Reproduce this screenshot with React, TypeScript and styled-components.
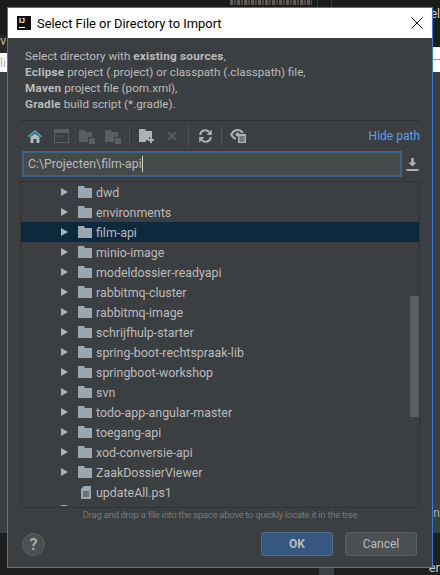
import styled, {createGlobalStyle} from "styled-components"

const folders = [
    "dwd",
    "environments",
    "film-api",
    "minio-image",
    "modeldossier-readyapi",
    "rabbitmq-cluster",
    "rabbitmq-image",
    "schrijfhulp-starter",
    "spring-boot-rechtspraak-lib",
    "springboot-workshop",
    "svn",
    "todo-app-angular-master",
    "toegang-api",
    "xod-conversie-api",
    "ZaakDossierViewer",
]

function FolderIcon(props: { color?: string }) {
    return (
        <svg width="14" height="12" viewBox="0 0 14 12">
            <path d="M0 0H6L7 2H14V12H0Z" fill={props.color ?? "#9aa7b0"}/>
        </svg>
    )
}

function GhostFolder(props: { color: string }) {
    return (
        <svg width="16" height="15" viewBox="0 0 16 15">
            <path d="M0 1H6L7 3H13V8H9V13H0Z" fill={props.color}/>
            <rect x="10" y="9" width="6" height="6" fill={props.color}/>
        </svg>
    )
}

export default function App() {
    return (
        <Screen>
            <GlobalStyle/>
            <BackTop>
                <BackLabel>v</BackLabel>
                <BackTicker/>
                <BackTabs/>
                <BackCorner>el</BackCorner>
            </BackTop>
            <BackWhite>
                <WhiteLabel>li</WhiteLabel>
                <WhiteRule/>
            </BackWhite>
            <BackPanel>
                <PanelLabel>un</PanelLabel>
            </BackPanel>
            <BackBottom>
                <BackBlock/>
                <BottomLabel>er</BottomLabel>
            </BackBottom>

            <Dialog>
                <TitleBar>
                    <Logo>
                        <LogoText>IJ</LogoText>
                        <LogoBar/>
                    </Logo>
                    <Title>Select File or Directory to Import</Title>
                    <CloseIcon width="12" height="12" viewBox="0 0 12 12">
                        <path d="M0.5 0.5L11.5 11.5M11.5 0.5L0.5 11.5" stroke="#111" strokeWidth="1" fill="none"/>
                    </CloseIcon>
                </TitleBar>

                <Body>
                    <Description>
                        <div>Select directory with <b>existing sources</b>,</div>
                        <div><b>Eclipse</b> project (.project) or classpath (.classpath) file,</div>
                        <div><b>Maven</b> project file (pom.xml),</div>
                        <div><b>Gradle</b> build script (*.gradle).</div>
                    </Description>

                    <Toolbar>
                        <ToolButton>
                            <svg width="14" height="13" viewBox="0 0 14 13">
                                <path d="M7 0L14 6L13 7.4L7 2.3L1 7.4L0 6Z" fill="#4a9fc9"/>
                                <path d="M2.5 7L7 3.4L11.5 7V13H8.5V9H5.5V13H2.5Z" fill="#aeb9c0"/>
                            </svg>
                        </ToolButton>
                        <ToolButton>
                            <svg width="15" height="14" viewBox="0 0 15 14">
                                <rect x="0.5" y="0.5" width="14" height="13" fill="none" stroke="#5b5d5e"/>
                                <rect x="1" y="1" width="13" height="3" fill="#5b5d5e"/>
                                <path d="M3 7H4.5M5.5 7H7M8 7H9.5" stroke="#5b5d5e" strokeWidth="1.4"/>
                            </svg>
                        </ToolButton>
                        <ToolButton><GhostFolder color="#5b5d5e"/></ToolButton>
                        <ToolButton><GhostFolder color="#5b5d5e"/></ToolButton>
                        <ToolSeparator/>
                        <ToolButton>
                            <svg width="15" height="14" viewBox="0 0 15 14">
                                <path d="M0 0H6L7 2H13V8H10V11H7V13H0Z" fill="#afb1b3"/>
                                <path d="M11 8H13V10H15V12H13V14H11V12H9V10H11Z" fill="#afb1b3"/>
                            </svg>
                        </ToolButton>
                        <ToolButton>
                            <svg width="10" height="10" viewBox="0 0 10 10">
                                <path d="M1 1L9 9M9 1L1 9" stroke="#5b5d5e" strokeWidth="2.2" fill="none"/>
                            </svg>
                        </ToolButton>
                        <ToolSeparator/>
                        <ToolButton>
                            <svg width="13" height="14" viewBox="0 0 13 14">
                                <path d="M1.2 6A5 5 0 0 1 10.2 3.2" stroke="#afb1b3" strokeWidth="2" fill="none"/>
                                <path d="M12.8 0.6V6H7.6Z" fill="#afb1b3"/>
                                <path d="M11.8 8A5 5 0 0 1 2.8 10.8" stroke="#afb1b3" strokeWidth="2" fill="none"/>
                                <path d="M0.2 13.4V8H5.4Z" fill="#afb1b3"/>
                            </svg>
                        </ToolButton>
                        <ToolSeparator/>
                        <ToolButton>
                            <svg width="16" height="14" viewBox="0 0 16 14">
                                <path d="M0 5.5C2 1.5 4.5 0 7.5 0C10.5 0 12.5 1.5 14 4H11.5C10.5 2.800 9 2 7.500 2C5.500 2 3.800 3.200 2.500 5.500C3.500 7.200 4.500 8.200 6 8.800V10.800C3.500 10.300 1.500 8.500 0 5.500Z" fill="#afb1b3"/>
                                <circle cx="7.500" cy="5.500" r="2" fill="#afb1b3"/>
                                <rect x="8" y="5" width="8" height="9" fill="#afb1b3"/>
                                <path d="M9.500 8H14.500M9.500 10H14.500M9.500 12H14.500" stroke="#3c3f41" strokeWidth="1"/>
                            </svg>
                        </ToolButton>
                        <HidePath>Hide path</HidePath>
                    </Toolbar>

                    <PathRow>
                        <PathField>
                            <PathText>C:\Projecten\film-api</PathText>
                            <Caret/>
                        </PathField>
                        <DownloadIcon width="13" height="13" viewBox="0 0 13 13">
                            <path d="M5.200 0H7.800V4.500H10.500L6.500 8.500L2.500 4.500H5.200Z" fill="#afb1b3"/>
                            <rect x="0.500" y="11" width="12" height="2" fill="#afb1b3"/>
                        </DownloadIcon>
                    </PathRow>

                    <Tree>
                        {folders.map((name: string) => (
                            <TreeRow key={name} $selected={name === "film-api"}>
                                <Arrow/>
                                <FolderIcon/>
                                <RowLabel>{name}</RowLabel>
                            </TreeRow>
                        ))}
                        <FileRow>
                            <svg width="10" height="13" viewBox="0 0 10 13">
                                <path d="M3 0H10V13H0V3Z" fill="#9aa7b0"/>
                                <path d="M2 6H8M2 8H8M2 10H8" stroke="#3c3f41" strokeWidth="1"/>
                            </svg>
                            <RowLabel>updateAll.ps1</RowLabel>
                        </FileRow>
                        <NextRowPeek/>
                        <ScrollThumb/>
                    </Tree>

                    <Hint>Drag and drop a file into the space above to quickly locate it in the tree</Hint>

                    <Footer>
                        <HelpButton>?</HelpButton>
                        <FooterButtons>
                            <OkButton>OK</OkButton>
                            <CancelButton>Cancel</CancelButton>
                        </FooterButtons>
                    </Footer>
                </Body>
            </Dialog>
        </Screen>
    )
}

const GlobalStyle = createGlobalStyle`
  html, body {
    margin: 0;
    padding: 0;
    background: #1c1c1c;
  }
  * {
    box-sizing: border-box;
  }
`

const Screen = styled.div`
  position: relative;
  width: 440px;
  height: 575px;
  overflow: hidden;
  display: flex;
  flex-direction: column;
  font-family: Roboto, "Noto Sans", sans-serif;
  font-size: 12px;
  color: #bbbbbb;
`

const BackTop = styled.div`
  position: relative;
  height: 47px;
  background: linear-gradient(#2a2a2a, #2a2a2a) left 35px / 8px 12px no-repeat, #1c1c1c;
  display: flex;
  justify-content: space-between;
`

const BackLabel = styled.span`
  align-self: flex-end;
  font-size: 13px;
  line-height: 13px;
  color: #c9b08a;
`

const BackCorner = styled.span`
  font-size: 12px;
  line-height: 12px;
  padding-top: 8px;
  color: #c8c8c8;
`

const BackTicker = styled.div`
  position: absolute;
  left: 230px;
  top: 0;
  width: 82px;
  height: 5px;
  background: repeating-linear-gradient(90deg, #5c5c5c 0 3px, #2a2a2a 3px 4px, #55443f 4px 6px, #1c1c1c 6px 7px);
`

const BackTabs = styled.div`
  position: absolute;
  left: 317px;
  top: 0;
  width: 15px;
  height: 7px;
  border-left: 1px solid #3a3a3a;
  border-right: 1px solid #3a3a3a;
`

const BackWhite = styled.div`
  height: 25px;
  background: linear-gradient(#2a2a2a, #2a2a2a) left top / 8px 6px no-repeat, #ffffff;
  display: flex;
  justify-content: space-between;
  align-items: center;
`

const WhiteLabel = styled.span`
  color: #b0a8b8;
  padding-top: 6px;
`

const WhiteRule = styled.div`
  width: 8px;
  height: 1px;
  background: #9a9a9a;
`

const BackPanel = styled.div`
  height: 461px;
  background: #3c3f41;
  display: flex;
  justify-content: flex-end;
  align-items: flex-end;
  padding-bottom: 13px;
`

const PanelLabel = styled.span`
  color: #a8a8a8;
`

const BackBottom = styled.div`
  flex: 1;
  background: #1e1e1e;
  display: flex;
  justify-content: flex-end;
  align-items: flex-end;
`

const BackBlock = styled.div`
  width: 15px;
  height: 7px;
  margin-right: 95px;
  background: #3c3f41;
`

const BottomLabel = styled.span`
  font-size: 13px;
  color: #cccccc;
`

const Dialog = styled.div`
  position: absolute;
  left: 7px;
  top: 7px;
  width: 426px;
  height: 561px;
  border: 1px solid #2a7fd3;
  background: #3c3f41;
  display: flex;
  flex-direction: column;
`

const TitleBar = styled.div`
  height: 30px;
  background: #ffffff;
  display: flex;
  align-items: center;
  padding: 0 9px 0 9px;
`

const Logo = styled.div`
  position: relative;
  width: 14px;
  height: 14px;
  margin-right: 6px;
  background: #111111;
`

const LogoText = styled.span`
  position: absolute;
  left: 2px;
  top: 1px;
  font-family: "Liberation Sans", sans-serif;
  font-size: 7px;
  line-height: 8px;
  font-weight: bold;
  color: #ffffff;
`

const LogoBar = styled.div`
  position: absolute;
  left: 2px;
  bottom: 2px;
  width: 6px;
  height: 1px;
  background: #ffffff;
`

const Title = styled.span`
  flex: 1;
  font-size: 12.9px;
  color: #000000;
`

const CloseIcon = styled.svg`
  display: block;
`

const Body = styled.div`
  flex: 1;
  display: flex;
  flex-direction: column;
  padding: 10px 12px 0 12px;
`

const Description = styled.div`
  padding-left: 5px;
  line-height: 16px;
  height: 72px;
  font-size: 11.7px;
  color: #bbbbbb;

  b {
    font-weight: bold;
    letter-spacing: 0.25px;
  }
`

const Toolbar = styled.div`
  height: 31px;
  border-top: 1px solid #323232;
  display: flex;
  align-items: center;
  padding-left: 2px;
`

const ToolButton = styled.div`
  width: 26px;
  height: 16px;
  display: flex;
  align-items: center;
  justify-content: center;
`

const ToolSeparator = styled.div`
  width: 1px;
  height: 20px;
  margin: 0 3px;
  background: #515151;
`

const HidePath = styled.span`
  margin-left: auto;
  color: #589df6;
  font-size: 12px;
`

const PathRow = styled.div`
  display: flex;
  align-items: center;
  height: 26px;
  margin-left: 2px;
`

const PathField = styled.div`
  width: 380px;
  height: 26px;
  border: 2px solid #3d6185;
  background: #45494a;
  display: flex;
  align-items: center;
  padding-left: 4px;
  font-size: 12.3px;
`

const PathText = styled.span`
  color: #bbbbbb;
`

const Caret = styled.span`
  width: 1px;
  height: 16px;
  background: #d0d0d0;
`

const DownloadIcon = styled.svg`
  display: block;
  margin-left: 4px;
`

const Tree = styled.div`
  position: relative;
  height: 327px;
  margin-top: 4px;
  overflow: hidden;
  border: 1px solid #323232;
`

const TreeRow = styled.div<{ $selected?: boolean }>`
  height: 20px;
  display: flex;
  align-items: center;
  padding-left: 40px;
  background: ${props => props.$selected ? "#0d293e" : "transparent"};
`

const Arrow = styled.span`
  width: 0;
  height: 0;
  margin-right: 10px;
  border-left: 7px solid #afb1b3;
  border-top: 4px solid transparent;
  border-bottom: 4px solid transparent;
`

const FileRow = styled(TreeRow)`
  padding-left: 60px;

  span {
    margin-left: 5px;
  }
`

const RowLabel = styled.span`
  margin-left: 4px;
  color: #bbbbbb;
  font-size: 12.4px;
  padding-top: 1px;
`

const NextRowPeek = styled.div`
  width: 6px;
  height: 1px;
  margin: 3px 0 0 40px;
  background: #9aa7b0;
`

const ScrollThumb = styled.div`
  position: absolute;
  right: 0;
  top: 114px;
  width: 9px;
  height: 121px;
  background: #5a5c5e;
`

const Hint = styled.div`
  height: 16px;
  margin-top: -1px;
  text-align: center;
  font-size: 9.5px;
  letter-spacing: -0.28px;
  line-height: 16px;
  color: #787878;
`

const Footer = styled.div`
  display: flex;
  justify-content: space-between;
  align-items: center;
  margin-top: 9px;
  padding: 0 3px 0 2px;
`

const HelpButton = styled.div`
  width: 23px;
  height: 23px;
  border-radius: 50%;
  border: 1px solid #5e6060;
  background: #4c5052;
  color: #a9a9a9;
  font-size: 16px;
  font-weight: bold;
  line-height: 21px;
  text-align: center;
`

const FooterButtons = styled.div`
  display: flex;
  gap: 12px;
`

const OkButton = styled.div`
  width: 72px;
  height: 24px;
  border: 1px solid #4c708c;
  border-radius: 3px;
  background: #365880;
  color: #bbbbbb;
  font-weight: bold;
  display: flex;
  align-items: center;
  justify-content: center;
`

const CancelButton = styled(OkButton)`
  border-color: #5e6060;
  background: #4c5052;
  font-weight: normal;
`
